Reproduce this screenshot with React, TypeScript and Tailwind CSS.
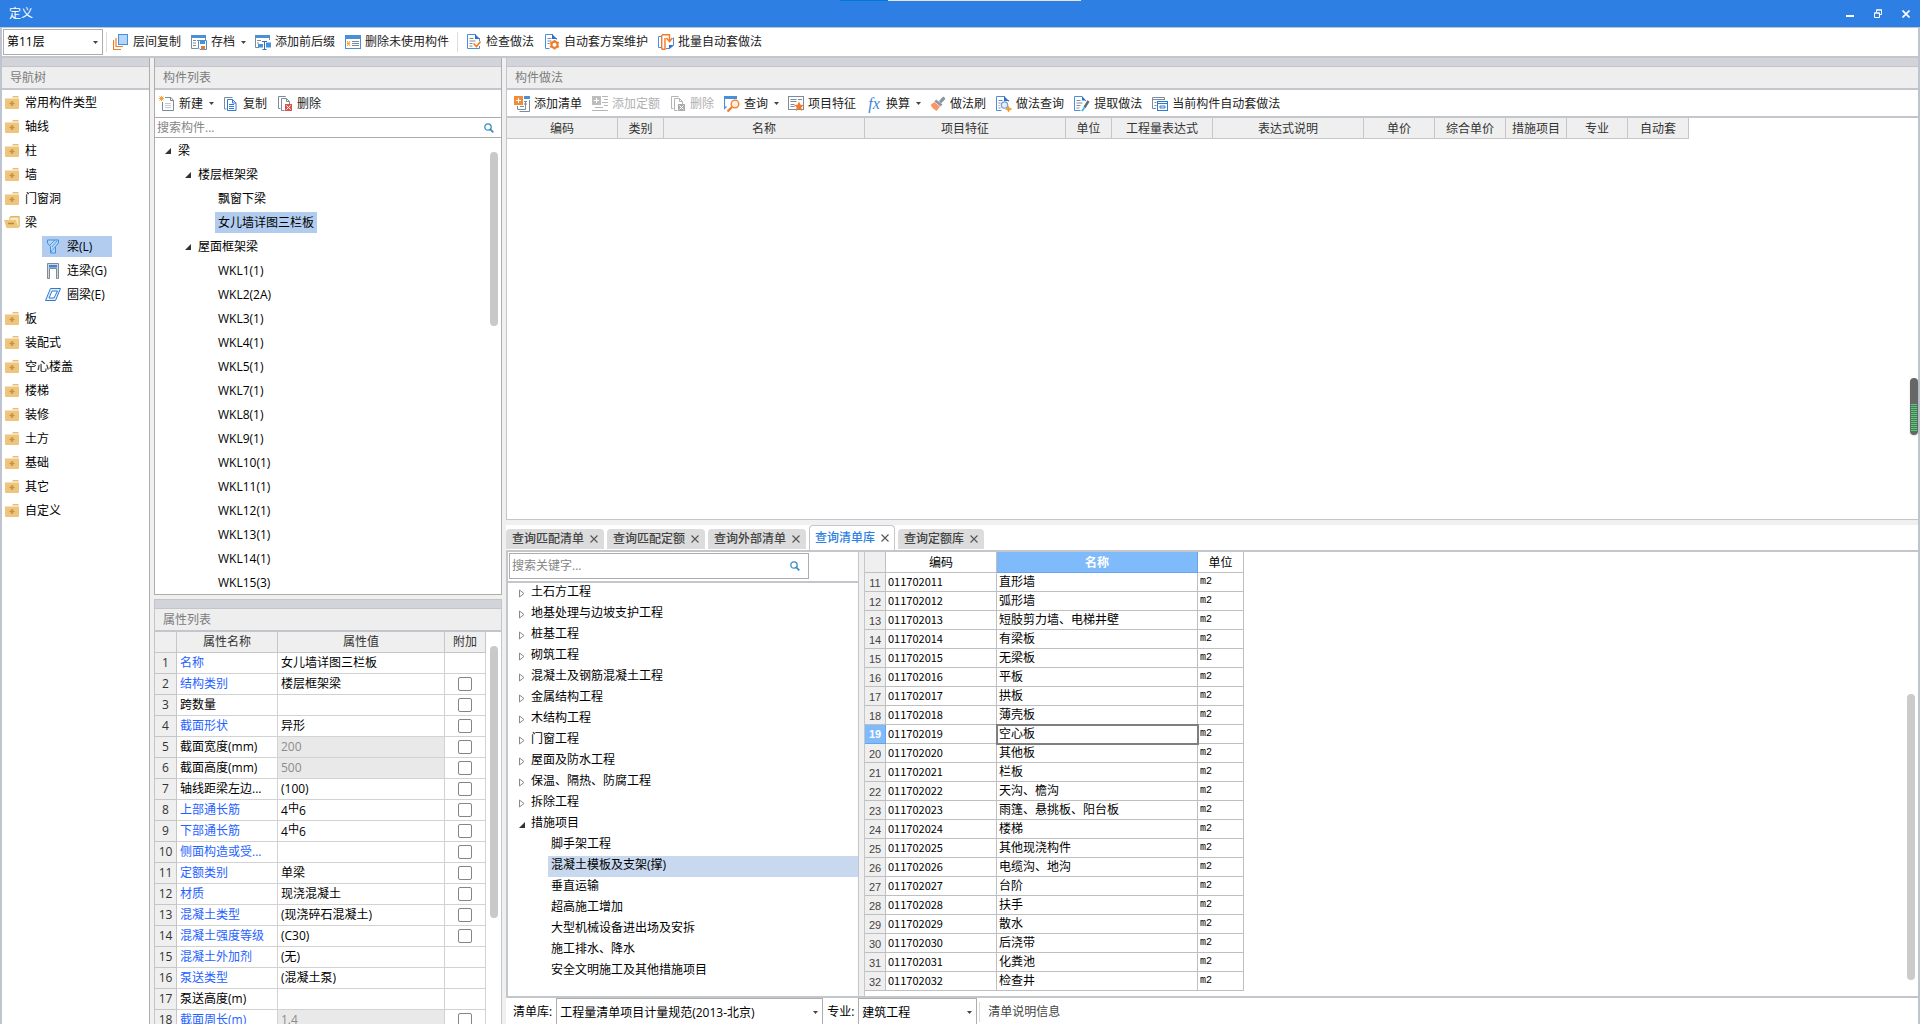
import type { ReactNode } from "react";

type IconProps = { children: ReactNode };
const Svg = ({ children }: IconProps) => (
  <svg viewBox="0 0 16 16" className="h-4 w-4 shrink-0" fill="none" aria-hidden="true">
    {children}
  </svg>
);

const BLUE = "#4a90d9";
const SLATE = "#7d8b99";
const ORANGE = "#f07b28";

const icons = {
  layerCopy: (
    <Svg>
      <path d="M.5 6v9.500H8M3 4v8.500h7" stroke={ORANGE} strokeWidth="1.200" />
      <rect x="5.500" y=".5" width="9" height="10" fill="#b5d6fb" stroke={BLUE} />
    </Svg>
  ),
  archive: (
    <Svg>
      <path d="M.5 3v11.500H7M14.500 3v3" stroke={SLATE} />
      <path d="M0 1h15v3H0z" fill={BLUE} />
      <path d="M2 6.500h3M6 6.500h5M2 9h3M2 11.500h3" stroke={SLATE} />
      <path d="M7.500 6.500h8v9H9l-1.500-1.500z" fill="#fff" stroke={BLUE} />
      <path d="M9 7h5v3H9z" fill={BLUE} />
      <path d="M10 12h4v3.500h-4z" fill={ORANGE} />
    </Svg>
  ),
  affix: (
    <Svg>
      <path d="M.5 3v10.500H4M14.500 3v3" stroke={SLATE} />
      <path d="M0 1h15v3H0z" fill={BLUE} />
      <path d="M2 6.500h4M2 9h2" stroke={SLATE} />
      <path d="M3 10h5v3.500H3zM11 8.500h5v5h-5z" fill={BLUE} />
      <path d="M7 7.500h5M9.500 7v8.500M7.500 15.500h4" stroke="#2f6fb5" />
    </Svg>
  ),
  unused: (
    <Svg>
      <rect x=".5" y="1.500" width="15" height="13" fill="#fff" stroke={BLUE} />
      <path d="M0 1h16v4H0z" fill={BLUE} />
      <path d="M2 7l3 5M5 7l-3 5M2 9.500h3" stroke="#f5a623" />
      <path d="M7 7.500h7M7 9.500h7M7 11.500h7" stroke={SLATE} />
    </Svg>
  ),
  check: (
    <Svg>
      <path d="M10 .5H1.500v14h12V12M13.500 7V4" stroke={BLUE} />
      <path d="M9 0l5 5H9z" fill="#2f6fc9" />
      <path d="M3.500 4.500h4M3.500 7h6M3.500 9.500h3M3.500 12h3" stroke={SLATE} />
      <path d="M7.500 9.500l3 3 4-5" stroke={ORANGE} strokeWidth="1.600" />
    </Svg>
  ),
  gearDoc: (
    <Svg>
      <path d="M9 .5H1.500v14h4M12.500 5.500V4" stroke={BLUE} />
      <path d="M8 0l5 5H8z" fill="#2f6fc9" />
      <path d="M3.500 4.500h4M3.500 7h4M3.500 9.500h2" stroke={SLATE} />
      <circle cx="10.500" cy="10.800" r="3" fill="#fff" stroke={ORANGE} strokeWidth="2" />
      <path
        d="M10.500 6v2M10.500 13.600v2M6.200 8.400l1.800 1M13 12.200l1.800 1M14.800 8.400l-1.800 1M8 12.200l-1.800 1"
        stroke={ORANGE}
        strokeWidth="2"
      />
    </Svg>
  ),
  batch: (
    <Svg>
      <path d="M3 2.500H.5v11h3" stroke={BLUE} />
      <path d="M8 14.500h3.500l4-3V3.500" stroke={BLUE} />
      <path d="M11 11h4.500L11 15z" fill="#2f6fc9" />
      <path d="M3.700 15.300V1.700L5 .7h6.500v5.500M3.700 15.300H7V4" stroke={ORANGE} strokeWidth="1.400" />
      <path d="M8.500 4l3 3.500 3-3.500" stroke={ORANGE} strokeWidth="1.500" />
    </Svg>
  ),
  create: (
    <Svg>
      <path d="M6 1.500h6l2.500 3v10h-11V6" fill="#fff" stroke={SLATE} />
      <path d="M11.500 1.500v3h3" stroke={SLATE} />
      <path d="M6 7.500h6M6 9.500h6M6 11.500h6" stroke="#c3c9cf" />
      <path d="M.5 .5l4 4M4.500 .5l-4 4M2.500 0v5M0 2.500h5" stroke="#f59a23" strokeWidth=".9" />
    </Svg>
  ),
  copy: (
    <Svg>
      <path d="M9.500 1.500h-8v11.500h2" stroke={SLATE} />
      <path d="M4.500 3.500h5l3.500 3.500v7.500H4.500z" fill="#fff" stroke="#2f7ad0" />
      <path d="M9.500 3.500V7H13" stroke="#2f7ad0" />
      <path d="M6 8.500h5M6 10.500h5M6 12.500h5" stroke="#2f7ad0" />
    </Svg>
  ),
  remove: (
    <Svg>
      <path d="M8.500 1V.5h-7v12h2" stroke={SLATE} />
      <path d="M7.500 14.500h-3v-12h5l3 3V8M9.500 2.500v3h3" stroke={SLATE} />
      <path d="M8 8h7v7H8z" fill="#d9534f" />
      <path d="M9.500 9.500l4 4M13.500 9.500l-4 4" stroke="#fff" />
    </Svg>
  ),
  removeOff: (
    <Svg>
      <path d="M8.500 1V.5h-7v12h2" stroke="#b5b5b5" />
      <path d="M7.500 14.500h-3v-12h5l3 3V8M9.500 2.500v3h3" stroke="#b5b5b5" />
      <path d="M8 8h7v7H8z" fill="#aaa" />
      <path d="M9.500 9.500l4 4M13.500 9.500l-4 4" stroke="#fff" />
    </Svg>
  ),
  addList: (
    <Svg>
      <path d="M3.500 10v3.500h8V6" stroke={SLATE} />
      <path d="M5.500 15.500h10V4" stroke={SLATE} />
      <path d="M10 0h6v3h-6z" fill={BLUE} />
      <path d="M10 5.500h3M10 8h3M6 10.500h4" stroke={SLATE} />
      <path d="M0 0h9v9H0z" fill="#ee8e3d" />
      <path d="M4.500 2v5M2 4.500h5" stroke="#fff" />
    </Svg>
  ),
  addQuota: (
    <Svg>
      <path d="M0 0h9v9H0z" fill="#bdbdbd" />
      <path d="M4.500 2v5M2 4.500h5" stroke="#fff" />
      <path d="M10 .5h6M12 3.500h4M10 6.500h6M12 9.500h4M3 11.500h8M0 14.500h16" stroke="#b5b5b5" />
    </Svg>
  ),
  query: (
    <Svg>
      <path d="M.5 3v9.500l2-2" stroke={BLUE} strokeWidth="1.200" />
      <path d="M0 0h13v3H0z" fill={BLUE} />
      <circle cx="11" cy="8" r="3.800" fill="#fdebdc" stroke={ORANGE} strokeWidth="1.300" />
      <path d="M8 11l-4.500 4.500" stroke={ORANGE} strokeWidth="2.200" />
    </Svg>
  ),
  feature: (
    <Svg>
      <rect x=".5" y=".5" width="15" height="13" stroke={SLATE} />
      <path d="M2.500 3.500h6M2.500 5.500h6M2.500 8.500h4M2.500 10.500h4M10 3.500h4" stroke={SLATE} />
      <path
        d="M11 5.500l1.500 3.200 3.500.3-2.700 2.200.9 3.800-3.200-2-3.200 2 .9-3.800L6 9l3.500-.3z"
        fill={ORANGE}
      />
    </Svg>
  ),
  brush: (
    <Svg>
      <path d="M9 5l4-4.500 1.500 1L15.500 3 11 7.500z" fill="#8b98a3" />
      <path d="M6 3.500l6.500 5-2 2-6-5z" fill="#8b98a3" />
      <path d="M4.500 6l5.500 4.800L6.500 15l-2-1.500L3 12.500.500 9z" fill="#fb9564" />
    </Svg>
  ),
  methodQuery: (
    <Svg>
      <path d="M9 .5H.5v14h5M12.500 5.500V4" stroke={BLUE} />
      <path d="M8 0l5 5H8z" fill="#2f6fc9" />
      <path d="M2.500 4.500h4M2.500 7h2M2.500 9.500h1M2.500 12h2" stroke={SLATE} />
      <circle cx="8.500" cy="9" r="3.200" fill="#e6f0fc" stroke="#7d9ed6" strokeWidth="1.300" />
      <path d="M12.500 10.500l1 2 2 .5-2 .7-1 2-.8-2-2-.7 2-.5z" fill="#f59a23" stroke="#f59a23" />
    </Svg>
  ),
  extract: (
    <Svg>
      <path d="M8 .5H.5v14h6M11.500 5V4" stroke={BLUE} />
      <path d="M8 0l4 4.500H8z" fill="#2f6fc9" />
      <path d="M2.500 4.500h4M2.500 7h6M2.500 9.500h4M2.500 12h3" stroke={SLATE} />
      <path d="M14.500 5l-4 6.500" stroke="#5f6d7a" strokeWidth="2.400" />
      <path d="M10.500 11.500L8 15" stroke="#39b7e6" strokeWidth="1.800" />
    </Svg>
  ),
  current: (
    <Svg>
      <path d="M4 12.500H.5v-11h12V4M0 3.500h12" stroke={SLATE} />
      <path d="M2.500 6.500h2M2.500 9.500h2" stroke={SLATE} />
      <rect x="5.500" y="5.500" width="10" height="9" fill="#fff" stroke="#2f7ad0" />
      <path d="M5.500 7.500h10" stroke="#2f7ad0" />
      <path d="M8 10h5v2H8z" stroke="#2f7ad0" />
    </Svg>
  ),
};

const FolderClosed = () => (
  <svg viewBox="0 0 14 13" className="h-[13px] w-[14px] shrink-0" aria-hidden="true">
    <path d="M8 0h5l1 1.500H7z" fill="#e9bd70" />
    <path d="M0 2.500h14V12a1 1 0 0 1-1 1H1a1 1 0 0 1-1-1z" fill="#edc57e" />
    <path d="M7 5v5M4.500 7.500h5" stroke="#c6943c" strokeWidth="1.600" />
  </svg>
);
const FolderOpen = () => (
  <svg viewBox="0 0 16 12" className="-ml-px h-3 w-4 shrink-0" aria-hidden="true">
    <path d="M7 0h8.500v11L13 6V2H5z" fill="#e2ae55" />
    <path d="M6 1h9v10H5z" fill="#fbe9c6" stroke="#e6b763" strokeWidth="1" />
    <path d="M0 4h12l2.500 8H2.500z" fill="#edc57e" />
    <path d="M4 7.500h6" stroke="#b98a35" strokeWidth="1.500" />
  </svg>
);
const BeamIcon = () => (
  <Svg>
    <path d="M2.500 1h11v3l-3 3.500V14H5.500V7.500l-3-3.500z" fill="#b5d6f5" stroke="#3f8fe0" />
    <path d="M5 6l5-5M6 13l4-5M7 8l5-6" stroke="#3f8fe0" strokeWidth=".8" />
  </Svg>
);
const LintelIcon = () => (
  <Svg>
    <path d="M2.500 15.500V.5h11v15h-2V5.500h-7v10z" fill="#cfd6dc" stroke={SLATE} />
    <path d="M4 2h8v2.500H4z" fill="#3f83d6" />
  </Svg>
);
const RingIcon = () => (
  <Svg>
    <path d="M5.500 1.500h10l-5 12H.5z" fill="#e3effc" stroke="#2f7ad0" />
    <path d="M7 4h5.500L9 11H4z" fill="#fff" stroke="#2f7ad0" />
  </Svg>
);

const Caret = () => (
  <svg viewBox="0 0 5 3" className="h-[3px] w-[5px] shrink-0" aria-hidden="true">
    <path d="M0 0h5L2.500 3z" fill="#444" />
  </svg>
);
const TriOpen = () => (
  <svg viewBox="0 0 6 6" className="h-1.5 w-1.5 shrink-0" aria-hidden="true">
    <path d="M6 0v6H0z" fill="#333" />
  </svg>
);
const TriShut = () => (
  <svg viewBox="0 0 6 9" className="h-[9px] w-1.5 shrink-0" aria-hidden="true">
    <path d="M.5 1v7L5 4.500z" fill="#fff" stroke="#8a8a8a" />
  </svg>
);
const Lens = () => (
  <svg viewBox="0 0 10 10" className="h-2.5 w-2.5 shrink-0" fill="none" aria-hidden="true">
    <circle cx="4" cy="4" r="3.200" stroke="#3c8dc0" strokeWidth="1.300" />
    <path d="M6.300 6.300L9.300 9.300" stroke="#3c8dc0" strokeWidth="1.800" />
  </svg>
);

type ToolProps = { icon: ReactNode; label: string; menu?: boolean; disabled?: boolean };
const Tool = ({ icon, label, menu, disabled }: ToolProps) => (
  <button
    type="button"
    disabled={disabled}
    className={
      menu
        ? "flex h-[21px] shrink-0 items-center gap-1 rounded-sm pl-1 pr-[3px] text-[#222]"
        : "flex h-[21px] shrink-0 items-center gap-1 rounded-sm px-1 text-[#222] disabled:text-[#b0b0b0]"
    }
  >
    {icon}
    <span>{label}</span>
    {menu && (
      <span className="pl-0.5">
        <Caret />
      </span>
    )}
  </button>
);

const Divider = () => <span className="mx-0.5 h-5 w-px bg-[#dcdcdc]" />;

const PanelTitle = ({ children }: { children: ReactNode }) => (
  <>
    <div className="h-[9px] shrink-0 border-b border-[#c3c5ca] bg-[#d3d4da]" />
    <h2 className="flex h-[23px] shrink-0 items-center border-b-2 border-[#c3c6ca] bg-[#eee] pl-2 text-[#7c7c7c]">
      {children}
    </h2>
  </>
);

type DropProps = { id: string; value: string; className: string };
const Drop = ({ id, value, className }: DropProps) => (
  <div className={className}>
    <select
      id={id}
      aria-label={value}
      className="h-full w-full appearance-none border border-[#adadad] bg-white pl-[3px] text-black outline-none"
    >
      <option>{value}</option>
    </select>
    <span className="pointer-events-none absolute inset-y-0 right-[5px] flex items-center">
      <Caret />
    </span>
  </div>
);

const navBefore = ["常用构件类型", "轴线", "柱", "墙", "门窗洞"];
const navAfter = ["板", "装配式", "空心楼盖", "楼梯", "装修", "土方", "基础", "其它", "自定义"];
const navBeams = [
  { label: "梁(L)", icon: <BeamIcon />, on: true },
  { label: "连梁(G)", icon: <LintelIcon />, on: false },
  { label: "圈梁(E)", icon: <RingIcon />, on: false },
];

const roofBeams = [
  "WKL1(1)", "WKL2(2A)", "WKL3(1)", "WKL4(1)", "WKL5(1)", "WKL7(1)", "WKL8(1)",
  "WKL9(1)", "WKL10(1)", "WKL11(1)", "WKL12(1)", "WKL13(1)", "WKL14(1)", "WKL15(3)",
];

type Prop = { name: string; value: ReactNode; blue?: boolean; box?: boolean; off?: boolean };
const Rebar = () => (
  <>
    4<span className="align-[3px] text-[11px] leading-none">中</span>6
  </>
);
const props: Prop[] = [
  { name: "名称", value: "女儿墙详图三栏板", blue: true },
  { name: "结构类别", value: "楼层框架梁", blue: true, box: true },
  { name: "跨数量", value: "", box: true },
  { name: "截面形状", value: "异形", blue: true, box: true },
  { name: "截面宽度(mm)", value: "200", box: true, off: true },
  { name: "截面高度(mm)", value: "500", box: true, off: true },
  { name: "轴线距梁左边...", value: "(100)", box: true },
  { name: "上部通长筋", value: <Rebar />, blue: true, box: true },
  { name: "下部通长筋", value: <Rebar />, blue: true, box: true },
  { name: "侧面构造或受...", value: "", blue: true, box: true },
  { name: "定额类别", value: "单梁", blue: true, box: true },
  { name: "材质", value: "现浇混凝土", blue: true, box: true },
  { name: "混凝土类型", value: "(现浇碎石混凝土)", blue: true, box: true },
  { name: "混凝土强度等级", value: "(C30)", blue: true, box: true },
  { name: "混凝土外加剂", value: "(无)", blue: true },
  { name: "泵送类型", value: "(混凝土泵)", blue: true },
  { name: "泵送高度(m)", value: "" },
  { name: "截面周长(m)", value: "1.4", blue: true, box: true, off: true },
];

const methodCols = [
  { label: "编码", w: "w-[111px]" },
  { label: "类别", w: "w-[46px]" },
  { label: "名称", w: "w-[201px]" },
  { label: "项目特征", w: "w-[201px]" },
  { label: "单位", w: "w-[46px]" },
  { label: "工程量表达式", w: "w-[101px]" },
  { label: "表达式说明", w: "w-[151px]" },
  { label: "单价", w: "w-[71px]" },
  { label: "综合单价", w: "w-[71px]" },
  { label: "措施项目", w: "w-[61px]" },
  { label: "专业", w: "w-[61px]" },
  { label: "自动套", w: "w-[61px]" },
];

const tabs = ["查询匹配清单", "查询匹配定额", "查询外部清单", "查询清单库", "查询定额库"];

const chapters = [
  "土石方工程", "地基处理与边坡支护工程", "桩基工程", "砌筑工程", "混凝土及钢筋混凝土工程",
  "金属结构工程", "木结构工程", "门窗工程", "屋面及防水工程", "保温、隔热、防腐工程", "拆除工程",
];
const measures = [
  "脚手架工程", "混凝土模板及支架(撑)", "垂直运输", "超高施工增加", "大型机械设备进出场及安拆",
  "施工排水、降水", "安全文明施工及其他措施项目",
];

const items = [
  "直形墙", "弧形墙", "短肢剪力墙、电梯井壁", "有梁板", "无梁板", "平板", "拱板", "薄壳板",
  "空心板", "其他板", "栏板", "天沟、檐沟", "雨篷、悬挑板、阳台板", "楼梯", "其他现浇构件",
  "电缆沟、地沟", "台阶", "扶手", "散水", "后浇带", "化粪池", "检查井",
].map((name, i) => ({ no: i + 11, code: `0117020${i + 11}`, name }));

const TitleBar = () => (
  <header className="relative flex h-[27px] shrink-0 items-center justify-between bg-[#2d7fe3] pl-[9px] pr-2.5 text-white">
    <div className="absolute left-[43.75%] top-0 flex h-px w-[241px]">
      <span className="w-12 bg-[#0078d7]" />
      <span className="flex-1 bg-[#e6e6e6]" />
    </div>
    <h1>定义</h1>
    <div className="flex items-center gap-5">
      <button type="button" aria-label="最小化">
        <svg viewBox="0 0 8 8" className="h-2 w-2">
          <path d="M0 5h8v2H0z" fill="#fff" />
        </svg>
      </button>
      <button type="button" aria-label="还原">
        <svg viewBox="0 0 8 9" className="h-[9px] w-2" fill="none" stroke="#fff">
          <path d="M2.500 3V1h5v4.500H6M2 .9h6" />
          <path d="M.5 4h5v4.500h-5zM0 4h6" />
        </svg>
      </button>
      <button type="button" aria-label="关闭">
        <svg viewBox="0 0 8 8" className="h-2 w-2" stroke="#fff" strokeWidth="1.700">
          <path d="M.5 .5l7 7M7.500 .5l-7 7" />
        </svg>
      </button>
    </div>
  </header>
);

const NavTree = () => (
  <nav className="flex w-[148px] shrink-0 flex-col border-r border-[#adadad]">
    <PanelTitle>导航树</PanelTitle>
    <ul className="flex-1 bg-white pl-[3px]">
      {navBefore.map((n) => (
        <li key={n}>
          <button type="button" className="flex h-6 items-center gap-1.5">
            <FolderClosed />
            <span className="pt-0.5">{n}</span>
          </button>
        </li>
      ))}
      <li>
        <button type="button" className="flex h-6 items-center gap-[5px]">
          <FolderOpen />
          <span className="pt-0.5">梁</span>
        </button>
        <ul className="pl-[37px]">
          {navBeams.map((b) => (
            <li key={b.label} className="flex h-6 items-end pb-px">
              <button
                type="button"
                className={
                  b.on
                    ? "flex h-[21px] w-[70px] items-center gap-1.5 bg-[#b1ccee] pl-[3px]"
                    : "flex h-[21px] w-[70px] items-center gap-1.5 pl-[3px]"
                }
              >
                {b.icon}
                {b.label}
              </button>
            </li>
          ))}
        </ul>
      </li>
      {navAfter.map((n) => (
        <li key={n}>
          <button type="button" className="flex h-6 items-center gap-1.5">
            <FolderClosed />
            <span className="pt-0.5">{n}</span>
          </button>
        </li>
      ))}
    </ul>
  </nav>
);

const ComponentList = () => (
  <section className="flex shrink-0 flex-col border-x border-[#adadad]">
    <PanelTitle>构件列表</PanelTitle>
    <div className="flex h-[27px] shrink-0 items-center gap-0.5 bg-white">
      <Tool icon={icons.create} label="新建" menu />
      <Tool icon={icons.copy} label="复制" />
      <Tool icon={icons.remove} label="删除" />
    </div>
    <label className="flex h-[21px] shrink-0 items-center border-y border-[#adadad] bg-white pl-0.5 pr-[7px]">
      <input
        aria-label="搜索构件"
        placeholder="搜索构件..."
        className="min-w-0 flex-1 outline-none placeholder:text-[#858585]"
      />
      <Lens />
    </label>
    <div className="relative border-b border-[#adadad] bg-white">
      <ul>
        <li>
          <button type="button" className="flex h-6 items-center gap-[7px] pl-2.5 pt-0.5">
            <TriOpen />梁
          </button>
          <ul>
            <li>
              <button type="button" className="flex h-6 items-center gap-[7px] pl-[30px] pt-0.5">
                <TriOpen />
                楼层框架梁
              </button>
              <ul className="pl-[60px]">
                <li className="flex h-6 items-end pb-px">
                  <button type="button" className="h-[21px] px-[3px]">飘窗下梁</button>
                </li>
                <li className="flex h-6 items-end pb-px">
                  <button type="button" className="h-[21px] bg-[#b1ccee] px-[3px]">
                    女儿墙详图三栏板
                  </button>
                </li>
              </ul>
            </li>
            <li>
              <button type="button" className="flex h-6 items-center gap-[7px] pl-[30px] pt-0.5">
                <TriOpen />
                屋面框架梁
              </button>
              <ul className="pl-[60px]">
                {roofBeams.map((b) => (
                  <li key={b} className="flex h-6 items-end pb-px">
                    <button type="button" className="h-[21px] px-[3px]">{b}</button>
                  </li>
                ))}
              </ul>
            </li>
          </ul>
        </li>
      </ul>
      <div className="absolute right-[3px] top-3.5 h-[174px] w-2 rounded-full bg-[#c9c9c9]" />
    </div>
  </section>
);

const head = "h-[21px] border-b border-r border-[#c6c6c6] bg-[#efefef] p-0 font-normal text-[#333]";
const PropertyList = () => (
  <section className="flex min-h-0 flex-1 flex-col border-x border-t border-[#c3c5ca]">
    <PanelTitle>属性列表</PanelTitle>
    <div className="relative min-h-0 flex-1 overflow-hidden bg-white">
      <table className="w-[331px] table-fixed border-separate border-spacing-0">
        <colgroup>
          <col className="w-[22px]" />
          <col className="w-[101px]" />
          <col className="w-[167px]" />
          <col className="w-[41px]" />
        </colgroup>
        <thead>
          <tr>
            <th className={head} />
            <th className={head}>属性名称</th>
            <th className={head}>属性值</th>
            <th className={head}>附加</th>
          </tr>
        </thead>
        <tbody>
          {props.map((p, i) => (
            <tr key={p.name}>
              <th className={head}>{i + 1}</th>
              <td
                className={
                  p.blue
                    ? "h-[21px] whitespace-nowrap border-b border-r border-[#d2d2d2] p-0 pl-[3px] text-[#1f62ff]"
                    : "h-[21px] whitespace-nowrap border-b border-r border-[#d2d2d2] p-0 pl-[3px]"
                }
              >
                {p.name}
              </td>
              <td
                className={
                  p.off
                    ? "h-[21px] border-b border-r border-[#d2d2d2] bg-[#e9e9e9] p-0 pl-[3px] text-[#8c8c8c]"
                    : "h-[21px] border-b border-r border-[#d2d2d2] p-0 pl-[3px]"
                }
              >
                {p.value}
              </td>
              <td className="h-[21px] border-b border-r border-[#d2d2d2] p-0">
                {p.box && (
                  <input
                    type="checkbox"
                    aria-label={p.name}
                    className="mx-auto block h-3.5 w-3.5 appearance-none rounded-[2px] border border-[#858585] bg-white"
                  />
                )}
              </td>
            </tr>
          ))}
        </tbody>
      </table>
      <div className="absolute right-[3px] top-3.5 h-[272px] w-2 rounded-full bg-[#c9c9c9]" />
    </div>
  </section>
);

const MethodPanel = () => (
  <section className="relative flex min-h-0 flex-1 flex-col border-b border-l border-[#c3c5ca] bg-white">
    <PanelTitle>构件做法</PanelTitle>
    <div className="flex h-7 shrink-0 items-center gap-0.5 border-b-2 border-[#c3c6ca] pl-[3px] pt-px">
      <Tool icon={icons.addList} label="添加清单" />
      <Tool icon={icons.addQuota} label="添加定额" disabled />
      <Tool icon={icons.removeOff} label="删除" disabled />
      <Tool icon={icons.query} label="查询" menu />
      <Tool icon={icons.feature} label="项目特征" />
      <Tool
        icon={
          <span className="w-4 font-['Liberation_Serif',serif] text-base italic leading-4 text-[#3f83d6]">
            fx
          </span>
        }
        label="换算"
        menu
      />
      <Tool icon={icons.brush} label="做法刷" />
      <Tool icon={icons.methodQuery} label="做法查询" />
      <Tool icon={icons.extract} label="提取做法" />
      <Tool icon={icons.current} label="当前构件自动套做法" />
    </div>
    <table className="table-fixed border-separate border-spacing-0 self-start">
      <thead>
        <tr>
          {methodCols.map((c) => (
            <th
              key={c.label}
              className={c.w + " h-[21px] border-b border-r border-[#c6c6c6] bg-[#efefef] p-0 pt-0.5 font-normal text-[#333]"}
            >
              {c.label}
            </th>
          ))}
        </tr>
      </thead>
    </table>
    <div className="absolute right-0 top-[320px] flex h-[57px] w-2 flex-col justify-end gap-px rounded-full bg-[#666] px-px pb-1 shadow">
      {Array.from({ length: 14 }, (_, i) => (
        <span key={i} className="h-px bg-[#3ddb6c]" />
      ))}
    </div>
  </section>
);

const QueryTabs = () => (
  <div role="tablist" className="flex h-[27px] shrink-0 items-end gap-[3px] border-b-2 border-[#c3c6ca] bg-white">
    {tabs.map((t, i) => {
      const on = i === 3;
      return (
        <div
          key={t}
          className={
            on
              ? "flex h-[25px] items-center gap-1.5 rounded-t border border-b-0 border-[#c3c6ca] bg-white px-[5px] text-[#2d7fe3]"
              : "mb-px flex h-5 items-center gap-1.5 rounded-t-sm bg-[#dcdcdc] px-1.5 text-[#444]"
          }
        >
          <button type="button" role="tab" aria-selected={on} className="font-medium">
            {t}
          </button>
          <button type="button" aria-label={"关闭" + t}>
            <svg viewBox="0 0 8 8" className="h-2 w-2" stroke="#555" strokeWidth="1.100">
              <path d="M.5 .5l7 7M7.500 .5l-7 7" />
            </svg>
          </button>
        </div>
      );
    })}
  </div>
);

const ChapterTree = () => (
  <div className="flex w-[351px] shrink-0 flex-col border-r border-[#c3c6ca] bg-white">
    <div className="shrink-0 border-b-2 border-[#c3c6ca] pb-0.5 pl-px pt-px">
      <label className="flex h-[26px] w-[300px] items-center border border-[#adadad] pl-0.5 pr-2">
        <input
          aria-label="搜索关键字"
          placeholder="搜索关键字..."
          className="min-w-0 flex-1 outline-none placeholder:text-[#858585]"
        />
        <Lens />
      </label>
    </div>
    <ul>
      {chapters.map((c) => (
        <li key={c}>
          <button type="button" className="flex h-[21px] items-center gap-1.5 pl-[11px]">
            <TriShut />
            <span className="pb-1">{c}</span>
          </button>
        </li>
      ))}
      <li>
        <button type="button" className="flex h-[21px] items-center gap-1.5 pl-[11px]">
          <TriOpen />
          <span className="pb-1">措施项目</span>
        </button>
        <ul className="pl-10">
          {measures.map((m, i) => (
            <li key={m}>
              <button
                type="button"
                className={
                  i === 1
                    ? "flex h-[21px] w-full items-center bg-[#c8d8ef] pl-[3px]"
                    : "flex h-[21px] w-full items-center pl-[3px]"
                }
              >
                <span className="pb-1">{m}</span>
              </button>
            </li>
          ))}
        </ul>
      </li>
    </ul>
  </div>
);

const cell = "h-[19px] border-b border-r border-[#bfbfbf] p-0 pl-0.5";
const ItemTable = () => (
  <div className="relative flex-1 border-l border-[#c3c6ca] bg-white pb-[5px] font-['Noto_Sans_CJK_SC',sans-serif]">
    <table className="w-[379px] table-fixed border-separate border-spacing-0 leading-4">
      <colgroup>
        <col className="w-[21px]" />
        <col className="w-[111px]" />
        <col className="w-[201px]" />
        <col className="w-[46px]" />
      </colgroup>
      <thead>
        <tr>
          <th className="h-[21px] border-b border-r border-[#bfbfbf] bg-[#efefef] p-0" />
          <th className="h-[21px] border-b border-r border-[#bfbfbf] p-0 font-normal">编码</th>
          <th className="h-[21px] border-b border-r border-[#66a5ec] bg-[#7fbafb] p-0 font-bold text-white">名称</th>
          <th className="h-[21px] border-b border-r border-[#bfbfbf] p-0 font-normal">单位</th>
        </tr>
      </thead>
      <tbody>
        {items.map((it) => {
          const on = it.no === 19;
          return (
            <tr key={it.no}>
              <th
                className={
                  on
                    ? "h-[19px] border-b border-r border-[#66a5ec] bg-[#7fbafb] p-0 font-['Liberation_Sans',sans-serif] text-[11px] font-bold text-white"
                    : "h-[19px] border-b border-r border-[#bfbfbf] bg-[#efefef] p-0 pt-0.5 font-['Liberation_Sans',sans-serif] text-[11px] font-normal text-[#444]"
                }
              >
                {it.no}
              </th>
              <td className={cell + " pb-0.5 text-[11px]"}>{it.code}</td>
              <td className={on ? cell + " pb-0.5 outline outline-2 -outline-offset-1 outline-[#7f7f7f]" : cell + " pb-0.5"}>
                {it.name}
              </td>
              <td className={cell + " font-['Liberation_Mono',monospace] text-[10px]"}>m2</td>
            </tr>
          );
        })}
      </tbody>
    </table>
    <div className="absolute bottom-4 right-[3px] h-[286px] w-2 rounded-full bg-[#cbcbcb]" />
  </div>
);

const BottomBar = () => (
  <footer className="flex h-7 shrink-0 items-start border-t-2 border-[#c3c6ca] bg-white pl-[7px] leading-7">
    <label htmlFor="lib" className="mr-1">清单库:</label>
    <Drop id="lib" value="工程量清单项目计量规范(2013-北京)" className="relative h-7 w-[267px]" />
    <label htmlFor="major" className="ml-1 mr-1">专业:</label>
    <Drop id="major" value="建筑工程" className="relative h-7 w-[119px]" />
    <span className="ml-0.5 mt-1 h-5 w-px bg-[#dcdcdc]" />
    <button type="button" className="ml-2 text-[#444]">清单说明信息</button>
  </footer>
);

export default function App() {
  return (
    <div className="flex h-screen flex-col overflow-hidden bg-[#f0f0f0] font-['Open_Sans','Noto_Sans_CJK_SC',sans-serif] text-xs text-black">
      <TitleBar />
      <div className="flex min-h-0 flex-1 flex-col border-l-2 border-r-2 border-t border-[#bfc5d0]">
        <div className="flex h-[30px] shrink-0 items-center gap-0.5 border-b-2 border-[#c3c6ca] bg-white pl-px">
          <Drop id="floor" value="第11层" className="relative h-[26px] w-[100px]" />
          <span className="ml-px h-5 w-px bg-[#dcdcdc]" />
          <div className="flex items-center gap-0.5">
            <Tool icon={icons.layerCopy} label="层间复制" />
            <Tool icon={icons.archive} label="存档" menu />
            <Tool icon={icons.affix} label="添加前后缀" />
            <Tool icon={icons.unused} label="删除未使用构件" />
            <Divider />
            <Tool icon={icons.check} label="检查做法" />
            <Tool icon={icons.gearDoc} label="自动套方案维护" />
            <Tool icon={icons.batch} label="批量自动套做法" />
          </div>
        </div>
        <div className="flex min-h-0 flex-1 gap-1">
          <NavTree />
          <div className="flex w-[348px] shrink-0 flex-col gap-1">
            <ComponentList />
            <PropertyList />
          </div>
          <main className="flex min-w-0 flex-1 flex-col gap-[5px]">
            <MethodPanel />
            <section className="flex shrink-0 flex-col">
              <QueryTabs />
              <div className="flex border-l-2 border-[#c3c6ca]">
                <ChapterTree />
                <div className="w-[5px]" />
                <ItemTable />
              </div>
              <BottomBar />
            </section>
          </main>
        </div>
      </div>
    </div>
  );
}
